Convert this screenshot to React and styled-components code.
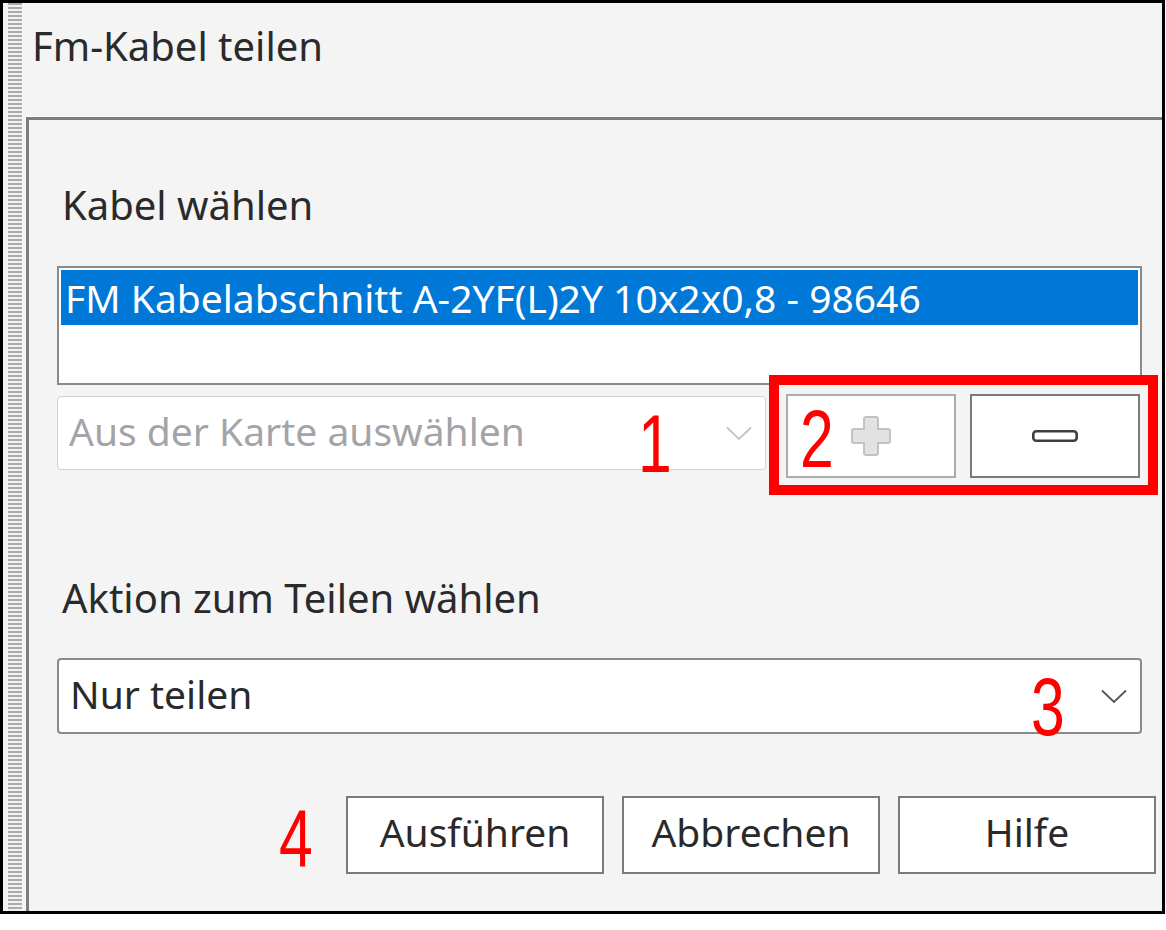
import React from "react";
import styled, { createGlobalStyle } from "styled-components";

const Global = createGlobalStyle`
  html, body { margin: 0; padding: 0; background: #ffffff; }
  body { font-family: "Noto Sans", "Open Sans", sans-serif; }
  * { box-sizing: border-box; }
`;

const Frame = styled.div`
  width: 1165px;
  height: 914px;
  border: 3px solid #000;
  background: #f4f4f4;
  display: flex;
  font-family: "Noto Sans", "Open Sans", sans-serif;
  font-size: 39px;
  line-height: 48px;
  color: #2a2a2a;
`;

const Gripper = styled.div`
  width: 14px;
  margin-left: 5px;
  margin-right: 4px;
  background: repeating-linear-gradient(
    to bottom,
    #ababab 0px,
    #ababab 2px,
    #f1f1f1 2px,
    #f1f1f1 4px
  );
`;

const Main = styled.div`
  flex: 1;
  display: flex;
  flex-direction: column;
  min-width: 0;
`;

const Title = styled.div`
  height: 114px;
  padding: 19px 0 0 6px;
  font-size: 40px;
  white-space: nowrap;
`;

const Panel = styled.div`
  flex: 1;
  border-top: 3px solid #7c7c7c;
  border-left: 3px solid #7c7c7c;
  box-shadow: 0 -1px 0 #ffffff;
  padding: 61px 20px 0 28px;
  display: flex;
  flex-direction: column;
`;

const Label = styled.div`
  margin-left: 5px;
  font-size: 40px;
  white-space: nowrap;
  margin-top: ${(p) => p.$top || 0}px;
`;

const ListBox = styled.div`
  margin-top: 37px;
  height: 119px;
  border: 2px solid #8a8a8a;
  background: #ffffff;
  padding: 2px;
`;

const ListRow = styled.div`
  height: 55px;
  background: ${(p) => (p.$selected ? "#0078d7" : "transparent")};
  color: ${(p) => (p.$selected ? "#ffffff" : "#2a2a2a")};
  padding-left: 4px;
  line-height: 55px;
  white-space: nowrap;
`;

const PickRow = styled.div`
  position: relative;
  margin-top: 9px;
  display: flex;
  align-items: flex-start;
  height: 84px;
`;

const Combo = styled.div`
  position: relative;
  flex: ${(p) => (p.$grow ? 1 : "none")};
  width: ${(p) => (p.$width ? `${p.$width}px` : "auto")};
  height: ${(p) => p.$height}px;
  margin-top: ${(p) => p.$offset || 0}px;
  border: ${(p) => (p.$disabled ? "1.5px solid #d2d2d2" : "2px solid #8a8a8a")};
  border-radius: 4px;
  background: #ffffff;
  display: flex;
  align-items: center;
  padding: 0 13px 0 11px;
  color: ${(p) => (p.$disabled ? "#a2a4a8" : "#2a2a2a")};
  white-space: nowrap;
`;

const ComboText = styled.span`
  flex: 1;
  margin-top: -5px;
`;

const Chevron = styled.svg`
  width: 26px;
  height: 15px;
  flex: none;
`;

const IconButton = styled.div`
  position: relative;
  width: 170px;
  height: 84px;
  margin-left: ${(p) => p.$ml}px;
  border: 2px solid ${(p) => (p.$disabled ? "#ababab" : "#7a7a7a")};
  background: #ffffff;
  display: flex;
  align-items: center;
  justify-content: center;
`;

const RedBox = styled.div`
  position: absolute;
  left: 712px;
  top: -19px;
  width: 389px;
  height: 120px;
  border: 10px solid #ff0000;
  pointer-events: none;
`;

const Marker = styled.span`
  position: absolute;
  font-family: "Liberation Sans", Arial, sans-serif;
  font-size: 82px;
  line-height: 1;
  color: #ff0000;
  transform: scaleX(0.74);
  transform-origin: left top;
  left: ${(p) => p.$x}px;
  top: ${(p) => p.$y}px;
`;

const ButtonRow = styled.div`
  position: relative;
  margin-top: 62px;
  margin-right: -14px;
  display: flex;
  justify-content: flex-end;
  gap: 18px;
`;

const Button = styled.div`
  width: 258px;
  height: 78px;
  border: 2px solid #7a7a7a;
  background: #ffffff;
  display: flex;
  align-items: center;
  justify-content: center;
  padding-bottom: 6px;
  white-space: nowrap;
`;

const ChevronIcon = ({ color }) => (
  <Chevron viewBox="0 0 26 15">
    <path d="M1 1.5 L13 13 L25 1.5" fill="none" stroke={color} strokeWidth="1.8" />
  </Chevron>
);

export default function App() {
  return (
    <>
      <Global />
      <Frame>
        <Gripper />
        <Main>
          <Title>Fm-Kabel teilen</Title>
          <Panel>
            <Label>Kabel wählen</Label>
            <ListBox>
              <ListRow $selected>FM Kabelabschnitt A-2YF(L)2Y 10x2x0,8 - 98646</ListRow>
            </ListBox>
            <PickRow>
              <Combo $width={709} $height={74} $offset={2} $disabled>
                <ComboText>Aus der Karte auswählen</ComboText>
                <ChevronIcon color="#c4c4c4" />
                <Marker $x={580} $y={6}>1</Marker>
              </Combo>
              <IconButton $ml={20} $disabled>
                <svg width="44" height="44" viewBox="0 0 44 44">
                  <path
                    d="M17 3 H27 Q29 3 29 5 V15 H39 Q41 15 41 17 V27 Q41 29 39 29 H29 V39 Q29 41 27 41 H17 Q15 41 15 39 V29 H5 Q3 29 3 27 V17 Q3 15 5 15 H15 V5 Q15 3 17 3 Z"
                    fill="#e2e2e2"
                    stroke="#c2c2c2"
                    strokeWidth="2"
                  />
                </svg>
                <Marker $x={12} $y={2}>2</Marker>
              </IconButton>
              <IconButton $ml={14}>
                <svg width="46" height="12" viewBox="0 0 46 12">
                  <rect x="1.3" y="1.3" width="43.4" height="9.4" rx="3" fill="#ffffff" stroke="#3c4046" strokeWidth="2.6" />
                </svg>
              </IconButton>
              <RedBox />
            </PickRow>
            <Label $top={96}>Aktion zum Teilen wählen</Label>
            <Combo $height={76} $offset={36}>
              <ComboText>Nur teilen</ComboText>
              <ChevronIcon color="#555555" />
              <Marker $x={972} $y={6}>3</Marker>
            </Combo>
            <ButtonRow>
              <Marker $x={222} $y={2}>4</Marker>
              <Button>Ausführen</Button>
              <Button>Abbrechen</Button>
              <Button>Hilfe</Button>
            </ButtonRow>
          </Panel>
        </Main>
      </Frame>
    </>
  );
}
